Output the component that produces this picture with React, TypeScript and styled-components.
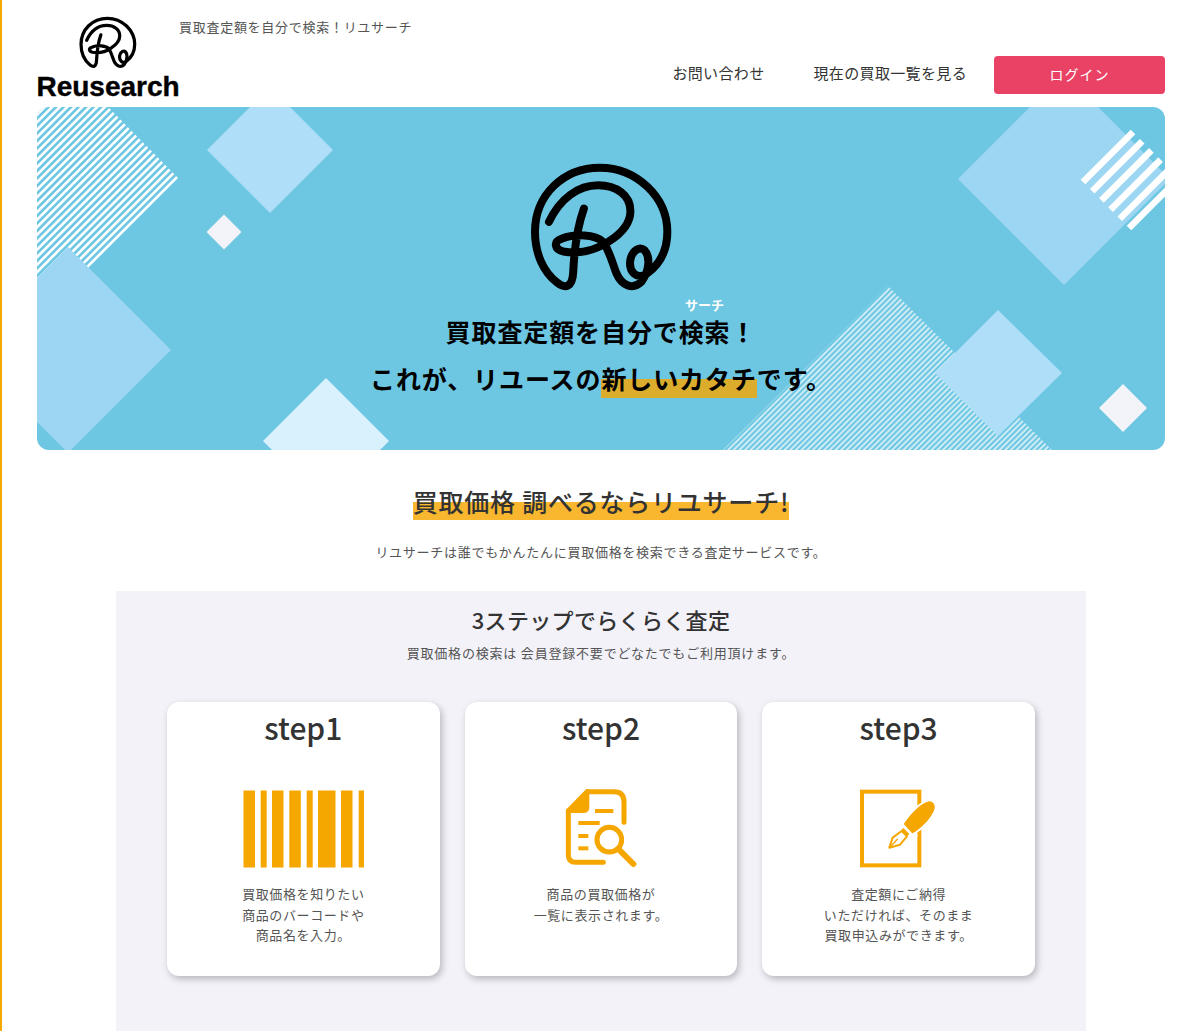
import React from "react";
import styled, { createGlobalStyle } from "styled-components";

const GlobalStyle = createGlobalStyle`
  html, body {
    margin: 0;
    padding: 0;
    background: #ffffff;
  }
  body {
    font-family: "Noto Sans CJK JP", "Noto Sans", sans-serif;
    color: #333333;
  }
`;

const Page = styled.div`
  box-sizing: border-box;
  min-height: 1031px;
  border-left: 2px solid #f5a800;
  padding: 0 35px;
`;

const Header = styled.header`
  display: flex;
  align-items: flex-start;
  height: 107px;
`;

const Brand = styled.div`
  display: flex;
  flex-direction: column;
  align-items: center;
  width: 142px;
  padding-top: 16px;
`;

const BrandName = styled.div`
  font-family: "Liberation Sans", Arial, sans-serif;
  font-weight: 700;
  font-size: 28px;
  line-height: 30px;
  color: #000000;
  -webkit-text-stroke: 0.4px #000000;
  margin-top: 3px;
  white-space: nowrap;
`;

const Tagline = styled.p`
  margin: 17px 0 0;
  font-size: 13px;
  line-height: 19px;
  letter-spacing: 0.72px;
  color: #555555;
`;

const Nav = styled.nav`
  display: flex;
  align-items: center;
  margin-left: auto;
  margin-top: 56px;
`;

const NavLink = styled.a`
  font-size: 15px;
  line-height: 34px;
  letter-spacing: 0.35px;
  color: #333333;
  margin-bottom: 4px;
  margin-right: ${(p: { $gap: number }) => p.$gap}px;
`;

const LoginButton = styled.button`
  width: 171px;
  height: 38px;
  padding: 0 0 2px;
  border: none;
  border-radius: 4px;
  background: #e94265;
  color: #ffffff;
  font-family: inherit;
  font-size: 14px;
  letter-spacing: 1px;
`;

const Hero = styled.section`
  position: relative;
  overflow: hidden;
  height: 343px;
  border-radius: 12px;
  background: #6dc7e3;
  text-align: center;
`;

const HeroArt = styled.svg`
  position: absolute;
  left: 0;
  top: 0;
  width: 100%;
  height: 100%;
`;

const HeroContent = styled.div`
  position: relative;
  display: flex;
  flex-direction: column;
  align-items: center;
  padding-top: 55px;
`;

const HeroTitle = styled.h1`
  margin: 13px 0 0;
  font-size: 25px;
  line-height: 47px;
  font-weight: 700;
  letter-spacing: 0.9px;
  color: #000000;

  ruby {
    ruby-align: center;
  }

  rt {
    position: relative;
    top: -8px;
    font-size: 13px;
    font-weight: 700;
    letter-spacing: 0;
    color: #ffffff;
  }
`;

const HeroMark = styled.span`
  background: linear-gradient(transparent 50%, #dcac2c 50%);
  padding-bottom: 2px;
`;

const Intro = styled.section`
  text-align: center;
  padding-top: 31px;
`;

const IntroTitle = styled.h2`
  margin: 0;
  font-size: 25px;
  line-height: 40px;
  font-weight: 500;
  letter-spacing: 0.77px;
  color: #333333;
`;

const IntroMark = styled.span`
  background: linear-gradient(transparent 50%, #f9b62f 50%);
  padding-bottom: 1px;
`;

const IntroText = styled.p`
  margin: 20px 0 0;
  font-size: 13px;
  line-height: 22px;
  letter-spacing: 0.72px;
  color: #555555;
`;

const StepsPanel = styled.section`
  box-sizing: border-box;
  width: 970px;
  height: 440px;
  margin: 28px auto 0;
  padding: 11px 51px 0;
  background: #f3f2f9;
  text-align: center;
`;

const StepsTitle = styled.h3`
  margin: 0;
  font-size: 22px;
  line-height: 34px;
  font-weight: 500;
  letter-spacing: 0.33px;
  color: #333333;
`;

const StepsText = styled.p`
  margin: 5px 0 0;
  font-size: 13px;
  line-height: 24px;
  letter-spacing: 0.8px;
  color: #555555;
`;

const StepsGrid = styled.div`
  display: grid;
  grid-template-columns: repeat(3, 1fr);
  gap: 25px;
  margin-top: 37px;
`;

const StepCard = styled.article`
  height: 274px;
  border-radius: 12px;
  background: #ffffff;
  box-shadow: 2px 3px 7px rgba(0, 0, 0, 0.25);
`;

const StepName = styled.div`
  font-size: 30px;
  line-height: 40px;
  padding-top: 5px;
  font-weight: 500;
  color: #333333;
`;

const StepIcon = styled.div`
  display: flex;
  justify-content: center;
  align-items: center;
  height: 100px;
  margin-top: 32px;
`;

const StepText = styled.p`
  margin: 5px 0 0;
  font-size: 13px;
  line-height: 20.5px;
  letter-spacing: 0.6px;
  color: #555555;
`;

const LogoMark = ({ width, color = "#000" }: { width: number; color?: string }) => (
  <svg width={width} viewBox="90 65 430 395" fill="none" style={{ display: "block" }}>
    <path
      d="M252 205 C236 250 224 310 220 395 C218 442 196 447 172 428 C130 395 105 340 105 275 C105 165 190 82 300 82 C410 82 503 170 503 275 C503 330 482 372 440 402 C412 420 385 395 392 358 C398 330 420 318 434 330 C452 348 450 392 425 425 C398 452 365 435 350 400 C338 370 330 335 310 305 C285 282 225 280 185 296 C158 306 165 328 190 334 C235 342 285 332 325 305 C365 280 392 250 392 212 C392 165 350 135 295 135 C235 135 180 175 147 245"
      stroke={color}
      strokeWidth="24"
      strokeLinecap="round"
      strokeLinejoin="round"
    />
  </svg>
);

const HeroBackground = () => (
  <HeroArt viewBox="37 107 1128 343" preserveAspectRatio="none">
    <defs>
      <pattern id="wideStripes" width="5.3" height="5.3" patternUnits="userSpaceOnUse" patternTransform="rotate(-45)">
        <rect width="5.3" height="2.6" fill="#ffffff" />
      </pattern>
      <pattern id="thinStripes" width="4" height="4" patternUnits="userSpaceOnUse" patternTransform="rotate(-45)">
        <rect width="4" height="2" fill="#ffffff" fillOpacity="0.65" />
      </pattern>
    </defs>
    <polygon points="108,107 179,179 37,321 37,107" fill="url(#wideStripes)" />
    <polygon points="68,247 171,350 68,453 -35,350" fill="#9dd6f3" />
    <polygon points="270,87 333,150 270,213 207,150" fill="#aedef8" />
    <polygon points="224,214.500 241.500,232 224,249.500 206.500,232" fill="#f3f3fa" />
    <polygon points="326,378 389,441 326,504 263,441" fill="#d9f0fd" />
    <polygon points="1064,73 1170,179 1064,285 958,179" fill="#9dd6f3" />
    {[0, 1, 2, 3, 4, 5].map((i) => (
      <line
        key={i}
        x1={1083 + i * 9.2}
        y1={182 + i * 9.2}
        x2={1133 + i * 9.2}
        y2={132 + i * 9.2}
        stroke="#ffffff"
        strokeWidth="6.5"
      />
    ))}
    <polygon points="888,286 1052,450 723,450" fill="url(#thinStripes)" />
    <polygon points="998,310 1062,373 998,436 935,373" fill="#aedef8" />
    <polygon points="1123,384 1147,408 1123,432 1099,408" fill="#f3f3fa" />
  </HeroArt>
);

const BarcodeIcon = () => (
  <svg width="121" height="78" viewBox="243 790 121 78" fill="#f5a700">
    {[
      [243.5, 11.5],
      [260.7, 6],
      [272, 11.5],
      [289.3, 11.5],
      [306.7, 6],
      [318, 17.5],
      [341, 11.5],
      [358.7, 5.3],
    ].map(([x, w]) => (
      <rect key={x} x={x} y="790.500" width={w} height="77" />
    ))}
  </svg>
);

const DocumentIcon = () => (
  <svg width="100" height="100" viewBox="3 0 300 300" fill="none" stroke="#f5a700">
    <path
      d="M112 38 H192 Q222 38 222 68 V130 M55 95 V228 Q55 250 77 250 H160"
      strokeWidth="15"
      strokeLinecap="round"
    />
    <path d="M108 31 H118 V84 Q118 102 100 102 H48 V92 Z" fill="#f5a700" stroke="none" />
    <g fill="#f5a700" stroke="none">
      <rect x="135" y="90" width="55" height="12" />
      <rect x="85" y="126" width="64" height="12" />
      <rect x="85" y="165" width="30" height="12" />
      <rect x="85" y="202" width="30" height="12" />
    </g>
    <circle cx="178" cy="182" r="37" strokeWidth="15" />
    <path d="M207 212 L250 255" strokeWidth="18" strokeLinecap="round" />
  </svg>
);

const PenIcon = () => (
  <svg width="100" height="100" viewBox="0 0 300 300" fill="none">
    <rect x="39" y="38" width="172" height="221" stroke="#f5a700" strokeWidth="12" />
    <path d="M120 207 L130 172 L162 142 L190 170 L158 198 Z" stroke="#ffffff" strokeWidth="24" fill="#ffffff" />
    <path d="M165 135 C185 105 215 72 238 68 C255 66 262 82 252 100 C238 128 210 152 190 163 Z" fill="#f5a700" stroke="#ffffff" strokeWidth="12" paintOrder="stroke" />
    <path d="M165 135 C185 105 215 72 238 68 C255 66 262 82 252 100 C238 128 210 152 190 163 Z" fill="#f5a700" />
    <path d="M160 150 L178 168" stroke="#f5a700" strokeWidth="9" />
    <path d="M121 206 L131 176 L158 156 L174 172 L153 197 Z" stroke="#f5a700" strokeWidth="6" strokeLinejoin="round" />
    <path d="M121 206 L146 180" stroke="#f5a700" strokeWidth="4" />
  </svg>
);

const steps = [
  { name: "step1", icon: <BarcodeIcon />, lines: ["買取価格を知りたい", "商品のバーコードや", "商品名を入力。"] },
  { name: "step2", icon: <DocumentIcon />, lines: ["商品の買取価格が", "一覧に表示されます。"] },
  { name: "step3", icon: <PenIcon />, lines: ["査定額にご納得", "いただければ、そのまま", "買取申込みができます。"] },
];

const App = () => {
  return (
    <Page>
      <GlobalStyle />
      <Header>
        <Brand>
          <LogoMark width={58} />
          <BrandName>Reusearch</BrandName>
        </Brand>
        <Tagline>買取査定額を自分で検索！リユサーチ</Tagline>
        <Nav>
          <NavLink $gap={49}>お問い合わせ</NavLink>
          <NavLink $gap={27}>現在の買取一覧を見る</NavLink>
          <LoginButton>ログイン</LoginButton>
        </Nav>
      </Header>

      <Hero>
        <HeroBackground />
        <HeroContent>
          <LogoMark width={143} />
          <HeroTitle>
            買取査定額を自分で
            <ruby>
              検索<rt>サーチ</rt>
            </ruby>
            ！
            <br />
            これが、リユースの<HeroMark>新しいカタチ</HeroMark>です。
          </HeroTitle>
        </HeroContent>
      </Hero>

      <Intro>
        <IntroTitle>
          <IntroMark>買取価格 調べるならリユサーチ!</IntroMark>
        </IntroTitle>
        <IntroText>リユサーチは誰でもかんたんに買取価格を検索できる査定サービスです。</IntroText>
      </Intro>

      <StepsPanel>
        <StepsTitle>3ステップでらくらく査定</StepsTitle>
        <StepsText>買取価格の検索は 会員登録不要でどなたでもご利用頂けます。</StepsText>
        <StepsGrid>
          {steps.map((step) => (
            <StepCard key={step.name}>
              <StepName>{step.name}</StepName>
              <StepIcon>{step.icon}</StepIcon>
              <StepText>
                {step.lines.map((line) => (
                  <React.Fragment key={line}>
                    {line}
                    <br />
                  </React.Fragment>
                ))}
              </StepText>
            </StepCard>
          ))}
        </StepsGrid>
      </StepsPanel>
    </Page>
  );
};

export default App;
